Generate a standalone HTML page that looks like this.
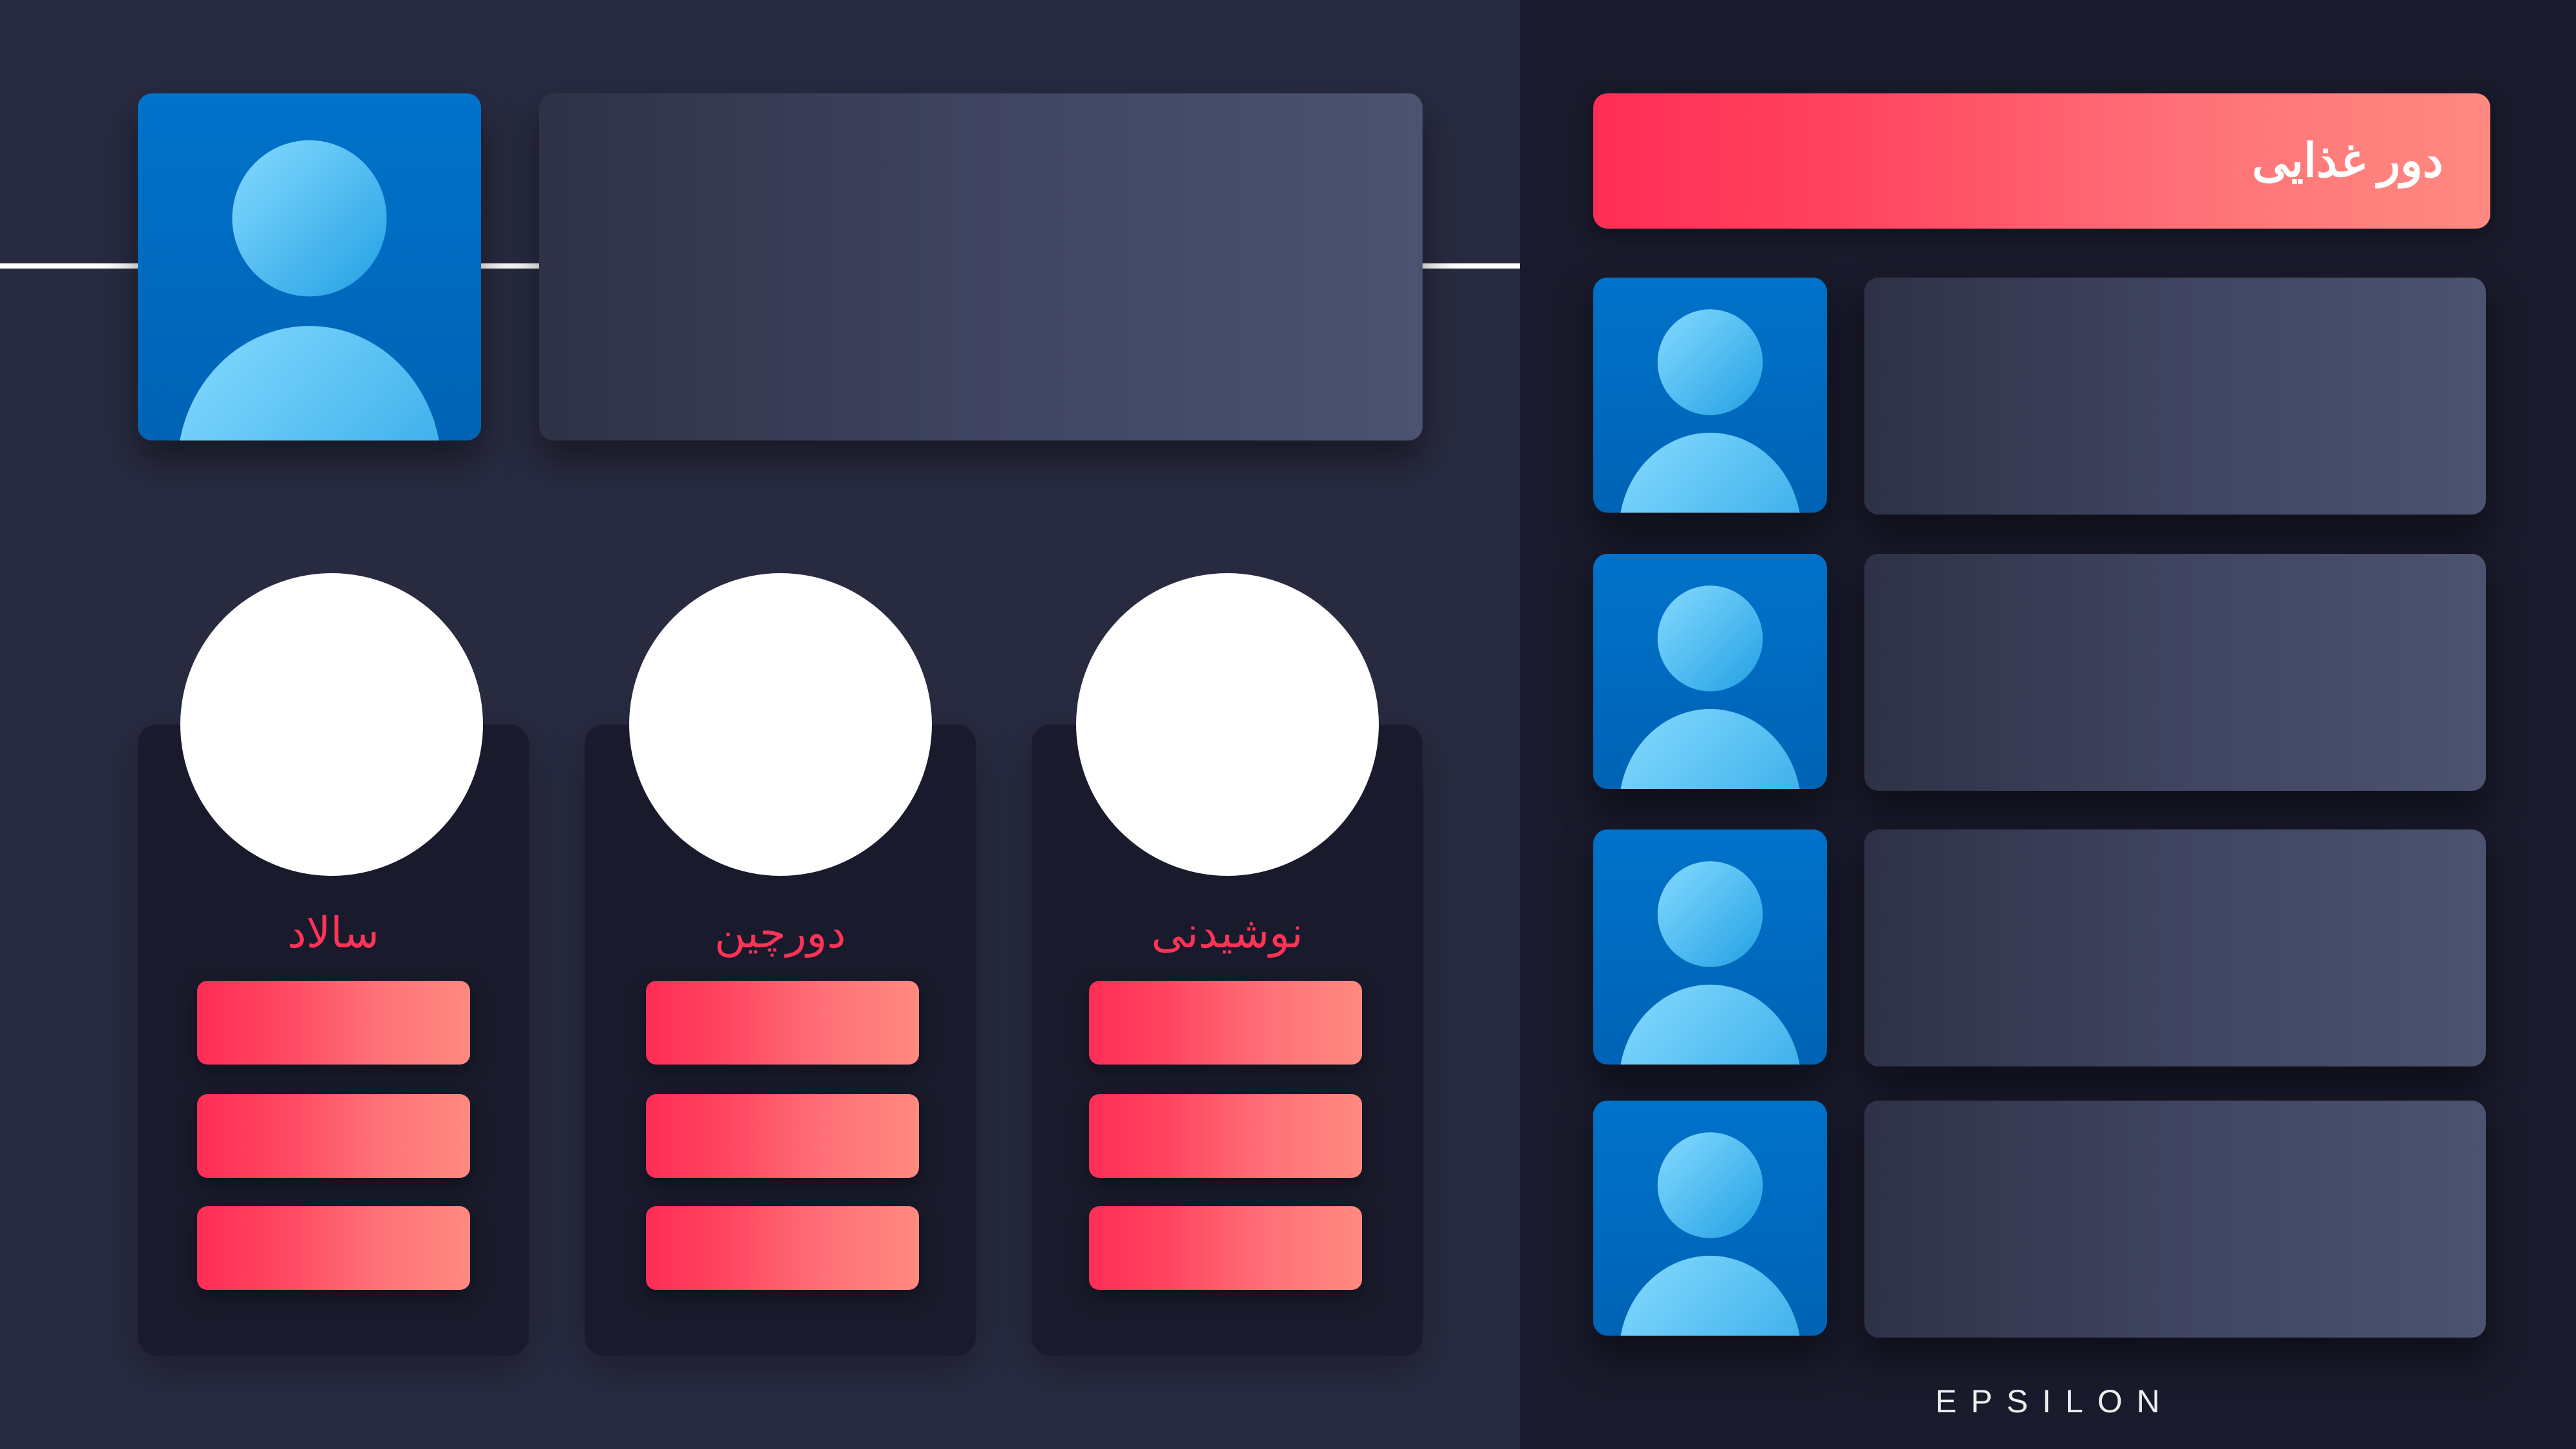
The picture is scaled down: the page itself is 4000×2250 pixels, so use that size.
<!DOCTYPE html>
<html><head><meta charset="utf-8"><style>
*{margin:0;padding:0;box-sizing:border-box}
body{width:4000px;height:2250px;overflow:hidden;position:relative;background:#282b40;font-family:"Liberation Sans","Noto Sans CJK SC",sans-serif}
.a{position:absolute}
.right{left:2360px;top:0;width:1640px;height:2250px;background:#191a2b}
.line{left:0;top:409px;width:2360px;height:8px;background:#fff}
.av{background:linear-gradient(180deg,#0072ca,#0063b5);border-radius:22px;overflow:hidden;box-shadow:0 30px 60px rgba(0,0,0,.45)}
.av svg{width:100%;height:100%;display:block}
.gb{border-radius:22px;background:linear-gradient(90deg,#2e3246,#3f4460 50%,#4c5370);box-shadow:0 30px 60px rgba(0,0,0,.45)}
.card{background:#191a2b;border-radius:30px;box-shadow:0 20px 60px rgba(0,0,0,.3)}
.circ{background:#fff;border-radius:50%;width:470px;height:470px}
.btn{border-radius:16px;background:linear-gradient(90deg,#ff2d55,#ff4660 30%,#ff7077 65%,#ff8a80);box-shadow:0 10px 30px rgba(0,0,0,.35)}
.lbl{color:#ff3358;font-size:66px;text-align:center;width:607px;direction:rtl}
</style></head><body>
<div class="a right"></div>
<div class="a line"></div>
<svg width="0" height="0" style="position:absolute"><defs>
<linearGradient id="hg" x1="0" y1="0" x2="1" y2="1"><stop offset="0" stop-color="#86dbff"/><stop offset="1" stop-color="#22a0e4"/></linearGradient>
</defs></svg>

<div class="a av" style="left:214px;top:145px;width:533px;height:539px"><svg viewBox="0 0 100 100" preserveAspectRatio="none"><circle cx="50" cy="36" r="22.5" fill="url(#hg)"/><ellipse cx="50" cy="108" rx="38.5" ry="41" fill="url(#hg)"/></svg></div>
<div class="a gb" style="left:837px;top:145px;width:1372px;height:539px"></div>

<div class="a card" style="left:214px;top:1125px;width:607px;height:980px"></div>
<div class="a card" style="left:908px;top:1125px;width:607px;height:980px"></div>
<div class="a card" style="left:1602px;top:1125px;width:607px;height:980px"></div>
<div class="a circ" style="left:280px;top:890px"></div>
<div class="a circ" style="left:977px;top:890px"></div>
<div class="a circ" style="left:1671px;top:890px"></div>
<div class="a lbl" style="left:214px;top:1410px">سالاد</div>
<div class="a lbl" style="left:908px;top:1410px">دورچین</div>
<div class="a lbl" style="left:1602px;top:1410px">نوشیدنی</div>

<div class="a btn" style="left:306px;top:1523px;width:424px;height:130px"></div>
<div class="a btn" style="left:306px;top:1699px;width:424px;height:130px"></div>
<div class="a btn" style="left:306px;top:1873px;width:424px;height:130px"></div>
<div class="a btn" style="left:1003px;top:1523px;width:424px;height:130px"></div>
<div class="a btn" style="left:1003px;top:1699px;width:424px;height:130px"></div>
<div class="a btn" style="left:1003px;top:1873px;width:424px;height:130px"></div>
<div class="a btn" style="left:1691px;top:1523px;width:424px;height:130px"></div>
<div class="a btn" style="left:1691px;top:1699px;width:424px;height:130px"></div>
<div class="a btn" style="left:1691px;top:1873px;width:424px;height:130px"></div>

<div class="a btn" style="left:2474px;top:145px;width:1393px;height:210px;border-radius:22px;"></div>
<div class="a" style="left:2474px;top:195px;width:1320px;text-align:right;direction:rtl;color:#fff;font-size:72px;font-weight:bold;line-height:110px">دور غذایی</div>

<div class="a av" style="left:2474px;top:431px;width:363px;height:365px"><svg viewBox="0 0 100 100" preserveAspectRatio="none"><circle cx="50" cy="36" r="22.5" fill="url(#hg)"/><ellipse cx="50" cy="108" rx="39" ry="42" fill="url(#hg)"/></svg></div>
<div class="a gb" style="left:2895px;top:431px;width:965px;height:368px"></div>
<div class="a av" style="left:2474px;top:860px;width:363px;height:365px"><svg viewBox="0 0 100 100" preserveAspectRatio="none"><circle cx="50" cy="36" r="22.5" fill="url(#hg)"/><ellipse cx="50" cy="108" rx="39" ry="42" fill="url(#hg)"/></svg></div>
<div class="a gb" style="left:2895px;top:860px;width:965px;height:368px"></div>
<div class="a av" style="left:2474px;top:1288px;width:363px;height:365px"><svg viewBox="0 0 100 100" preserveAspectRatio="none"><circle cx="50" cy="36" r="22.5" fill="url(#hg)"/><ellipse cx="50" cy="108" rx="39" ry="42" fill="url(#hg)"/></svg></div>
<div class="a gb" style="left:2895px;top:1288px;width:965px;height:368px"></div>
<div class="a av" style="left:2474px;top:1709px;width:363px;height:365px"><svg viewBox="0 0 100 100" preserveAspectRatio="none"><circle cx="50" cy="36" r="22.5" fill="url(#hg)"/><ellipse cx="50" cy="108" rx="39" ry="42" fill="url(#hg)"/></svg></div>
<div class="a gb" style="left:2895px;top:1709px;width:965px;height:368px"></div>

<div class="a" style="left:3005px;top:2148px;color:#eee;font-size:50px;letter-spacing:22px;line-height:56px">EPSILON</div>
</body></html>
